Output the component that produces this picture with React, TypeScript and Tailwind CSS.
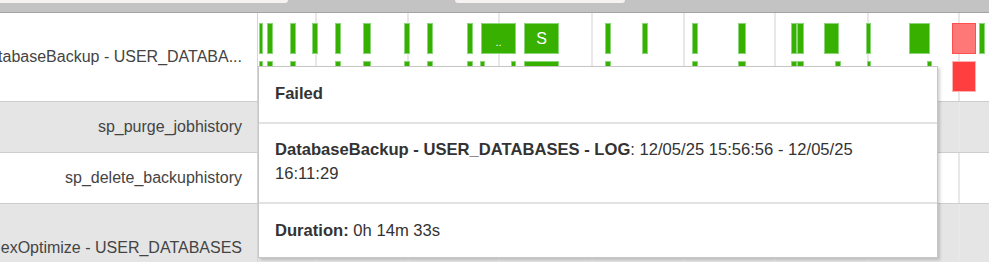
import React from "react";

type Bar = { a: number; b: number; kind?: "g" | "r1" | "r2"; label?: string; small?: boolean };

const OFFSET = 258;
const gridX = [315, 407, 498, 591, 683, 774, 867, 958];

const rowA: Bar[] = [
  { a: 259, b: 263 }, { a: 267, b: 273 }, { a: 290, b: 296 }, { a: 312, b: 318 },
  { a: 335, b: 341 }, { a: 363, b: 371 }, { a: 404, b: 410 }, { a: 427, b: 433 },
  { a: 467, b: 473 }, { a: 481, b: 516, label: "..", small: true }, { a: 524, b: 559, label: "S" },
  { a: 605, b: 611 }, { a: 642, b: 648 }, { a: 692, b: 698 }, { a: 738, b: 746 },
  { a: 791, b: 797 }, { a: 797, b: 804 }, { a: 824, b: 839 }, { a: 866, b: 871 },
  { a: 909, b: 930 }, { a: 952, b: 976, kind: "r1" }, { a: 979, b: 985 },
];

const rowB: Bar[] = [
  { a: 259, b: 263 }, { a: 267, b: 273 }, { a: 290, b: 296 }, { a: 335, b: 341 },
  { a: 363, b: 371 }, { a: 404, b: 410 }, { a: 427, b: 433 }, { a: 467, b: 473 },
  { a: 480, b: 485 }, { a: 511, b: 516 }, { a: 524, b: 559 }, { a: 605, b: 611 },
  { a: 692, b: 698 }, { a: 738, b: 746 }, { a: 791, b: 797 }, { a: 797, b: 804 },
  { a: 835, b: 841 }, { a: 867, b: 871 }, { a: 927, b: 932 }, { a: 952, b: 976, kind: "r2" },
];

function BarEl({ bar, top }: { bar: Bar; top: number }) {
  const cls =
    bar.kind === "r1"
      ? "bg-[#ff7878] border-[#ff4f4f]"
      : bar.kind === "r2"
      ? "bg-[#ff3f3f] border-[#ffb0b0]"
      : "bg-[#38b000] border-[#8bd67a]";
  return (
    <div
      className={`absolute h-[31px] border flex items-center justify-center text-white leading-none ${cls} ${bar.small ? "text-[11px] pt-[8px]" : "text-[16px]"}`}
      style={{ left: bar.a - OFFSET, width: bar.b - bar.a, top }}
    >
      {bar.label}
    </div>
  );
}

function Grid() {
  return (
    <>
      {gridX.map((x) => (
        <div key={x} className="absolute top-0 bottom-0 w-[2px] bg-[#e8e8e8]" style={{ left: x - OFFSET }} />
      ))}
    </>
  );
}

function Row({ label, gray, h, children }: { label: string; gray?: boolean; h: string; children?: React.ReactNode }) {
  return (
    <div className={`flex ${h} border-b border-[#cdcdcd] ${gray ? "bg-[#e5e5e5]" : "bg-white"}`}>
      <div className="w-[258px] shrink-0 border-r border-[#d6d6d6] overflow-hidden flex items-center justify-end pr-[15px]">
        <span className="whitespace-nowrap text-[16px] text-[#444]">{label}</span>
      </div>
      <div className="relative flex-1">
        <Grid />
        {children}
      </div>
    </div>
  );
}

export default function App() {
  return (
    <div className="relative w-[989px] h-[262px] overflow-hidden bg-white" style={{ fontFamily: '"Liberation Sans", Arial, sans-serif' }}>
      <div className="flex items-start h-[13px] bg-[#c3c3c3] border-b border-[#a3a3a3]">
        <div className="w-[288px] h-[3px] bg-[#f7f2f2] rounded-br-[5px]" />
        <div className="w-[167px]" />
        <div className="w-[170px] h-[3px] bg-[#f7f2f2] rounded-b-[5px]" />
      </div>
      <Row label="DatabaseBackup - USER_DATABA..." h="h-[89px]">
        {rowA.map((b, i) => (
          <BarEl key={"a" + i} bar={b} top={10} />
        ))}
        {rowB.map((b, i) => (
          <BarEl key={"b" + i} bar={b} top={48} />
        ))}
      </Row>
      <Row label="sp_purge_jobhistory" gray h="h-[51px]" />
      <Row label="sp_delete_backuphistory" h="h-[51px]" />
      <Row label="IndexOptimize - USER_DATABASES" gray h="h-[89px]" />

      <div className="absolute left-[258px] top-[66px] w-[680px] bg-white border border-[#c6c6c6] shadow-[2px_2px_3px_rgba(0,0,0,0.18)] text-[16.6px] leading-[24px] text-[#333]">
        <div className="px-[16px] pt-[15px] pb-[16px] font-bold">Failed</div>
        <div className="h-[2px] bg-[#e2e2e2]" />
        <div className="px-[16px] pt-[14px] pb-[16px]">
          <span className="font-bold">DatabaseBackup - USER_DATABASES - LOG</span>: 12/05/25 15:56:56 - 12/05/25
          <br />
          16:11:29
        </div>
        <div className="h-[2px] bg-[#e2e2e2]" />
        <div className="px-[16px] pt-[15px] pb-[14px]">
          <span className="font-bold">Duration:</span> 0h 14m 33s
        </div>
      </div>
    </div>
  );
}
